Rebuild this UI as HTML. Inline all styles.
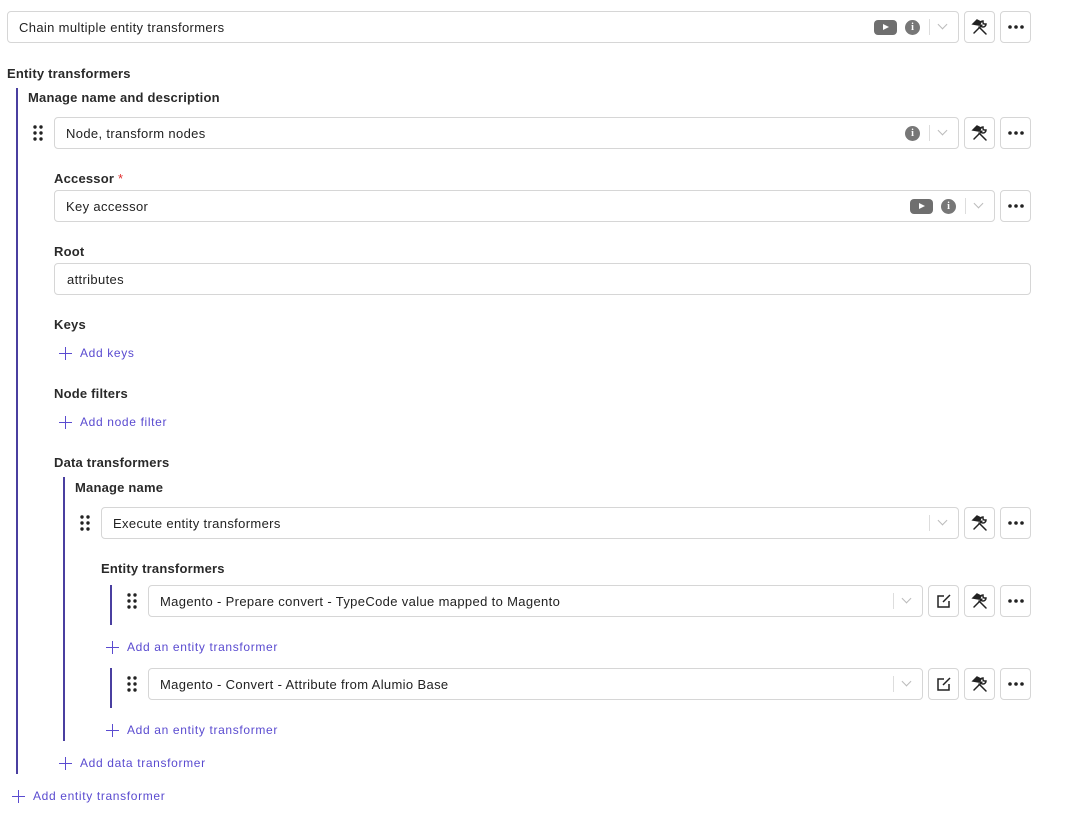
<!DOCTYPE html>
<html><head><style>
body{margin:0;width:1079px;height:820px;background:#fff;font-family:"Liberation Sans",sans-serif;font-size:13px;color:#222;position:relative;overflow:hidden}
.sel{position:absolute;border:1px solid #d6d6d6;border-radius:4px;box-sizing:border-box;height:32px;background:#fff}
.sel .t{position:absolute;left:11px;top:8px;font-size:13px;color:#222;letter-spacing:0.35px;white-space:nowrap}
.btn{position:absolute;width:31px;height:32px;border:1px solid #d6d6d6;border-radius:4px;box-sizing:border-box;background:#fff;display:flex;align-items:center;justify-content:center}
.lbl{position:absolute;font-weight:bold;font-size:13px;color:#2a2a2a;letter-spacing:0.2px}
.lnk{position:absolute;color:#5a4bd0;font-size:12px;letter-spacing:0.65px}
.lnk i{position:absolute;left:-21px;top:1px;width:13px;height:13px}
.lnk i:before{content:"";position:absolute;left:6px;top:0;width:1.3px;height:13px;background:#5a4bd0}
.lnk i:after{content:"";position:absolute;left:0;top:6px;width:13px;height:1.3px;background:#5a4bd0}
.vl{position:absolute;width:1.5px;background:#4a3fa0}
.chev{position:absolute;width:28px;border-left:1px solid #ddd;top:7px;height:16px}
.chev:after{content:"";position:absolute;left:9px;top:2px;width:6px;height:6px;border-right:1.5px solid #bbb;border-bottom:1.5px solid #bbb;transform:rotate(45deg)}
.info{position:absolute;top:8px;width:15px;height:15px;border-radius:50%;background:#777;color:#fff;font-size:10px;font-weight:bold;text-align:center;line-height:15px;font-family:"Liberation Serif",serif}
.play{position:absolute;top:8px;width:23px;height:15px;border-radius:4px;background:#6f6f6f}
.play:after{content:"";position:absolute;left:9px;top:4px;border-left:6px solid #fff;border-top:3.5px solid transparent;border-bottom:3.5px solid transparent}
.h{position:absolute;width:10px;height:16px}
</style></head><body>
<svg width="0" height="0" style="position:absolute"><defs>
<g id="dots"><circle cx="-6" cy="0" r="1.8" fill="#222"/><circle cx="0" cy="0" r="1.8" fill="#222"/><circle cx="6" cy="0" r="1.8" fill="#222"/></g>
<g id="tools" fill="none" stroke="#222" stroke-width="1.5" stroke-linecap="round"><path d="M3 15 L11 7"/><path d="M2 6 L6 2 L10 4 L8 7 Z" fill="#222"/><path d="M8 9 L15 16"/><path d="M12 3 a3 3 0 1 0 3 3 l-2 0 -1 -1 0 -2z"/></g>
<g id="hd"><circle cx="2" cy="2" r="1.7" fill="#222"/><circle cx="8" cy="2" r="1.7" fill="#222"/><circle cx="2" cy="8" r="1.7" fill="#222"/><circle cx="8" cy="8" r="1.7" fill="#222"/><circle cx="2" cy="14" r="1.7" fill="#222"/><circle cx="8" cy="14" r="1.7" fill="#222"/></g>
</defs></svg>

<div class="sel" style="left:7px;top:11px;width:952px"><span class="t">Chain multiple entity transformers</span><span class="play" style="left:866px"></span><span class="info" style="left:897px">i</span><span class="chev" style="left:921px"></span></div>
<div class="btn" style="left:964px;top:11px"><svg width="18" height="18"><use href="#tools"/></svg></div>
<div class="btn" style="left:1000px;top:11px"><svg width="18" height="6"><use href="#dots" x="9" y="3"/></svg></div>

<div class="lbl" style="left:7px;top:66px">Entity transformers</div>
<div class="vl" style="left:16px;top:88px;height:686px"></div>
<div class="lbl" style="left:28px;top:90px">Manage name and description</div>
<svg class="h" style="left:33px;top:125px"><use href="#hd"/></svg>
<div class="sel" style="left:54px;top:117px;width:905px"><span class="t">Node, transform nodes</span><span class="info" style="left:850px">i</span><span class="chev" style="left:874px"></span></div>
<div class="btn" style="left:964px;top:117px"><svg width="18" height="18"><use href="#tools"/></svg></div>
<div class="btn" style="left:1000px;top:117px"><svg width="18" height="6"><use href="#dots" x="9" y="3"/></svg></div>

<div class="lbl" style="left:54px;top:171px">Accessor <span style="color:#e03030;font-weight:normal">*</span></div>
<div class="sel" style="left:54px;top:190px;width:941px"><span class="t">Key accessor</span><span class="play" style="left:855px"></span><span class="info" style="left:886px">i</span><span class="chev" style="left:910px"></span></div>
<div class="btn" style="left:1000px;top:190px"><svg width="18" height="6"><use href="#dots" x="9" y="3"/></svg></div>

<div class="lbl" style="left:54px;top:244px">Root</div>
<div class="sel" style="left:54px;top:263px;width:977px"><span class="t" style="left:12px">attributes</span></div>

<div class="lbl" style="left:54px;top:317px">Keys</div>
<div class="lnk" style="left:80px;top:346px"><i></i>Add keys</div>
<div class="lbl" style="left:54px;top:386px">Node filters</div>
<div class="lnk" style="left:80px;top:415px"><i></i>Add node filter</div>
<div class="lbl" style="left:54px;top:455px">Data transformers</div>
<div class="vl" style="left:63px;top:477px;height:264px"></div>
<div class="lbl" style="left:75px;top:480px">Manage name</div>
<svg class="h" style="left:80px;top:515px"><use href="#hd"/></svg>
<div class="sel" style="left:101px;top:507px;width:858px"><span class="t">Execute entity transformers</span><span class="chev" style="left:827px"></span></div>
<div class="btn" style="left:964px;top:507px"><svg width="18" height="18"><use href="#tools"/></svg></div>
<div class="btn" style="left:1000px;top:507px"><svg width="18" height="6"><use href="#dots" x="9" y="3"/></svg></div>

<div class="lbl" style="left:101px;top:561px">Entity transformers</div>
<div class="vl" style="left:110px;top:585px;height:40px"></div>
<svg class="h" style="left:127px;top:593px"><use href="#hd"/></svg>
<div class="sel" style="left:148px;top:585px;width:775px"><span class="t">Magento - Prepare convert - TypeCode value mapped to Magento</span><span class="chev" style="left:744px"></span></div>
<div class="btn" style="left:928px;top:585px"><svg width="18" height="18" fill="none" stroke="#222" stroke-width="1.5"><path d="M9 4 H3 V15 H14 V9"/><path d="M8 10 L15 3"/></svg></div>
<div class="btn" style="left:964px;top:585px"><svg width="18" height="18"><use href="#tools"/></svg></div>
<div class="btn" style="left:1000px;top:585px"><svg width="18" height="6"><use href="#dots" x="9" y="3"/></svg></div>
<div class="lnk" style="left:127px;top:640px"><i></i>Add an entity transformer</div>

<div class="vl" style="left:110px;top:668px;height:40px"></div>
<svg class="h" style="left:127px;top:676px"><use href="#hd"/></svg>
<div class="sel" style="left:148px;top:668px;width:775px"><span class="t">Magento - Convert - Attribute from Alumio Base</span><span class="chev" style="left:744px"></span></div>
<div class="btn" style="left:928px;top:668px"><svg width="18" height="18" fill="none" stroke="#222" stroke-width="1.5"><path d="M9 4 H3 V15 H14 V9"/><path d="M8 10 L15 3"/></svg></div>
<div class="btn" style="left:964px;top:668px"><svg width="18" height="18"><use href="#tools"/></svg></div>
<div class="btn" style="left:1000px;top:668px"><svg width="18" height="6"><use href="#dots" x="9" y="3"/></svg></div>
<div class="lnk" style="left:127px;top:723px"><i></i>Add an entity transformer</div>

<div class="lnk" style="left:80px;top:756px"><i></i>Add data transformer</div>
<div class="lnk" style="left:33px;top:789px"><i></i>Add entity transformer</div>
</body></html>
